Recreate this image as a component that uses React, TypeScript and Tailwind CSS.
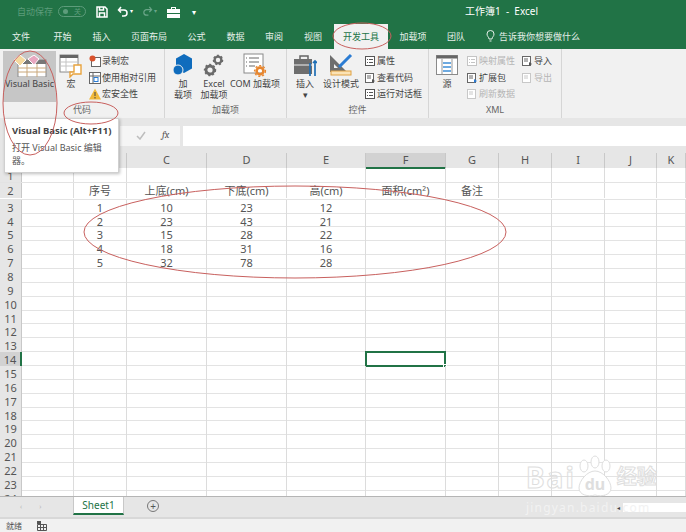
const font = "[font-family:'Noto_Sans','Noto_Sans_CJK_SC',sans-serif]"

const rowClass = 'grid grid-cols-[22px_52px_53px_80px_80px_79px_80px_53px_53px_53px_52px_1fr]'
const tabs = [
  ['文件', 'w-[42px]'],
  ['开始', 'w-[41px]'],
  ['插入', 'w-[37px]'],
  ['页面布局', 'w-[58px]'],
  ['公式', 'w-[37px]'],
  ['数据', 'w-[41px]'],
  ['审阅', 'w-[36px]'],
  ['视图', 'w-[42px]'],
]
const columns = ['A', 'B', 'C', 'D', 'E', 'F', 'G', 'H', 'I', 'J', 'K']
const cells: Record<number, string[]> = {
  2: ['', '序号', '上底(cm)', '下底(cm)', '高(cm)', '面积(cm²)', '备注'],
  3: ['', '1', '10', '23', '12'],
  4: ['', '2', '23', '43', '21'],
  5: ['', '3', '15', '28', '22'],
  6: ['', '4', '18', '31', '16'],
  7: ['', '5', '32', '78', '28'],
}

const SmallItem = ({ icon, label, off }: { icon: React.ReactNode; label: string; off?: boolean }) => (
  <div className={`flex h-[16.5px] items-center gap-[1px] whitespace-nowrap text-[9px] ${off ? 'text-[#b5b5b5]' : 'text-[#444]'}`}>
    <span className="flex h-3 w-3 shrink-0 items-center justify-center">{icon}</span>
    {label}
  </div>
)

const LargeButton = ({ width, icon, lines }: { width: string; icon: React.ReactNode; lines: string[] }) => (
  <div className={`flex ${width} shrink-0 flex-col items-center pt-1 text-[9px] leading-[11px] text-[#444]`}>
    <div className="flex h-[25px] items-center justify-center">{icon}</div>
    {lines.map((l) => (
      <div key={l} className="whitespace-nowrap">{l}</div>
    ))}
  </div>
)

const Group = ({ width, label, children }: { width: string; label: string; children: React.ReactNode }) => (
  <div className={`flex ${width} shrink-0 flex-col border-r border-[#d6d6d6]`}>
    <div className="flex h-[55px]">{children}</div>
    <div className="h-[11px] text-center text-[9px] leading-[11px] text-[#666]">{label}</div>
  </div>
)

const BoxIcon = ({ off }: { off?: boolean }) => (
  <svg width="12" height="12" viewBox="0 0 12 12" fill="none" stroke={off ? '#c4c4c4' : '#555'}>
    <rect x="1.5" y="1.5" width="9" height="9" fill="#fff" />
    <path d="M3 4.5h1M5 4.5h4M3 7.5h1M5 7.5h4" />
  </svg>
)

const VbIcon = () => (
  <svg width="36" height="22" viewBox="0 0 36 22">
    <rect x="6" y="5" width="28" height="17" fill="#fff" stroke="#8a8a8a" />
    <rect x="6" y="5" width="28" height="4" fill="#777" />
    <path d="M6 13h28M6 17h28M15 9v13M25 9v13" stroke="#c9a77a" />
    <path d="M8 0l6 5-6 6-6-6z" fill="#f5d9a0" stroke="#fff" />
    <path d="M22 0l5 4-5 6-6-6z" fill="#e8a7c0" stroke="#fff" />
  </svg>
)

const MacroIcon = () => (
  <svg width="24" height="25" viewBox="0 0 24 25">
    <rect x="1" y="2" width="18" height="17" fill="#fff" stroke="#8a8a8a" />
    <rect x="1" y="2" width="18" height="3" fill="#666" />
    <path d="M1 9h18M1 13h18M7 5v14" stroke="#c4c4c4" />
    <path d="M15 12h7v9h-8l-3 3v-5h4z" fill="#fff" stroke="#e8a33d" strokeWidth="1.4" />
  </svg>
)

const AddinIcon = () => (
  <svg width="20" height="22" viewBox="0 0 20 22">
    <path d="M11 0l8 4.5v10L11 19l-8-4.5v-10z" fill="#0f6cbd" />
    <circle cx="5" cy="16" r="5" fill="#0f6cbd" stroke="#f1f1f1" />
  </svg>
)

const Gear = ({ x, y, r }: { x: number; y: number; r: number }) => (
  <g>
    <circle cx={x} cy={y} r={r} fill="none" stroke="#6b6b6b" strokeWidth={r * 0.7} />
    <circle cx={x} cy={y} r={r * 1.35} fill="none" stroke="#6b6b6b" strokeWidth={r * 0.4} strokeDasharray="2 2" />
  </g>
)

const GearsIcon = () => (
  <svg width="22" height="24" viewBox="0 0 22 24">
    <Gear x={7} y={17} r={4} />
    <Gear x={15} y={7} r={3.4} />
  </svg>
)

const ComIcon = () => (
  <svg width="24" height="24" viewBox="0 0 24 24">
    <rect x="1" y="1" width="19" height="19" fill="#fff" stroke="#8a8a8a" />
    <path d="M6 5h10M6 9h10M6 13h6M3 5h1M3 9h1M3 13h1" stroke="#666" />
    <circle cx="17" cy="18" r="3.4" fill="none" stroke="#e8862e" strokeWidth="2.6" />
    <circle cx="17" cy="18" r="5.4" fill="none" stroke="#e8862e" strokeWidth="1.4" strokeDasharray="2 2" />
  </svg>
)

const ToolboxIcon = () => (
  <svg width="23" height="21" viewBox="0 0 23 21">
    <path d="M6 4V1h8v3" fill="none" stroke="#666" strokeWidth="1.5" />
    <rect x="0" y="4" width="18" height="15" fill="#6e6e6e" />
    <path d="M0 10h18" stroke="#f1f1f1" />
    <path d="M16 8v13M21 6v15M19 8l2-2 2 2" stroke="#1f6fb5" strokeWidth="1.7" fill="none" />
  </svg>
)

const DesignIcon = () => (
  <svg width="26" height="24" viewBox="0 0 26 24">
    <path d="M2 2v17h17z M6 11v4h4z" fill="#6e6e6e" fillRule="evenodd" />
    <path d="M11 14L23 2" stroke="#2b7cd3" strokeWidth="3" />
    <rect x="3" y="18" width="20" height="4" fill="#fbe3b5" stroke="#e0a243" />
  </svg>
)

const SourceIcon = () => (
  <svg width="22" height="20" viewBox="0 0 22 20">
    <rect x="0.5" y="0.5" width="21" height="19" fill="#fff" stroke="#8a8a8a" />
    <rect x="0.5" y="0.5" width="21" height="3" fill="#666" />
    <path d="M6 4v15M16 4v15" stroke="#999" />
    <path d="M7 8h8M7 12h8M7 16h8" stroke="#3f8fd6" strokeWidth="1.5" />
  </svg>
)

const PageIcon = ({ off, color }: { off?: boolean; color?: string }) => (
  <svg width="12" height="12" viewBox="0 0 12 12" fill="none" stroke={off ? '#c8c8c8' : '#666'}>
    <rect x="1.5" y="1.5" width="8" height="9" fill="#fff" />
    <path d="M3 4h4M3 6h4" />
    {color && <path d="M8 7l3 2-3 2z" fill={color} stroke="none" />}
  </svg>
)

export default function App() {
  const rows = Array.from({ length: 24 }, (_, i) => i + 1)

  return (
    <div className={`relative flex h-[532px] w-[686px] flex-col overflow-hidden bg-white ${font}`}>
      {/* Title bar */}
      <div className="flex h-6 items-center bg-[#217346] text-white">
        <span className="ml-[17px] text-[9px] text-[#5d9c7b]">自动保存</span>
        <span className="ml-[5px] flex h-[11px] w-7 items-center justify-between rounded-full border border-[#5d9c7b] px-1 text-[7px] leading-none text-[#5d9c7b]">
          <span className="h-[5px] w-[5px] rounded-full bg-[#5d9c7b]" />关
        </span>
        <svg className="ml-[10px]" width="12" height="12" viewBox="0 0 12 12" fill="none" stroke="#fff" strokeWidth="1.5">
          <path d="M1 1h8l2 2v8H1zM3.5 1v3h4V1M3.5 11V7h5v4" />
        </svg>
        <svg className="ml-[9px]" width="12" height="12" viewBox="0 0 12 12" fill="none" stroke="#fff" strokeWidth="1.5">
          <path d="M4 1L1.5 4 4 6.500M2 4h5a3 3 0 010 6H5" />
        </svg>
        <span className="ml-[1px] text-[6px]">▾</span>
        <svg className="ml-[9px]" width="11" height="11" viewBox="0 0 12 12" fill="none" stroke="#6aa588" strokeWidth="1.3">
          <path d="M8 1l2.500 3L8 6.500M10 4H5a3 3 0 000 6h2" />
        </svg>
        <span className="ml-[1px] text-[6px] text-[#6aa588]">▾</span>
        <svg className="ml-[10px]" width="13" height="12" viewBox="0 0 13 12" fill="#fff">
          <path d="M4 3V1h5v2h4v4H0V3zM5 2v1h3V2zM0 8h13v4H0z" />
        </svg>
        <span className="ml-[12px] text-[8px]">▾</span>
        <span className="ml-[269px] whitespace-nowrap text-[10px]">工作簿1&nbsp; -&nbsp; Excel</span>
      </div>

      {/* Tabs */}
      <div className="flex h-[25px] items-center bg-[#217346] text-[9px] text-[#e6f0ea]">
        {tabs.map(([t, w]) => (
          <div key={t} className={`${w} text-center`}>{t}</div>
        ))}
        <div className="flex h-full w-[54px] items-center justify-center bg-[#f1f1f1] text-[#217346]">开发工具</div>
        <div className="w-[50px] text-center">加载项</div>
        <div className="w-9 text-center">团队</div>
        <svg className="ml-[12px]" width="9" height="12" viewBox="0 0 9 12" fill="none" stroke="#e6f0ea">
          <path d="M3 9C3 7 1 6.500 1 4a3.500 3.500 0 017 0C8 6.500 6 7 6 9zM3.500 11h2" />
        </svg>
        <span className="ml-[4px]">告诉我你想要做什么</span>
      </div>

      {/* Ribbon */}
      <div className="flex h-[69px] bg-[#f1f1f1]">
        <Group width="w-[165px]" label="代码">
          <div className="ml-[3px] mt-[2px] flex h-[51px] w-[53px] flex-col items-center bg-[#c6c6c6] pt-[3px] text-[9px] leading-[11px] text-[#444]">
            <div className="flex h-[24px] items-center"><VbIcon /></div>
            <div className="whitespace-nowrap">Visual Basic</div>
          </div>
          <LargeButton width="w-[30px]" icon={<MacroIcon />} lines={['宏']} />
          <div className="ml-[3px] pt-[4px]">
            <SmallItem
              label="录制宏"
              icon={
                <svg width="12" height="12" viewBox="0 0 12 12">
                  <rect x="2.500" y="2.500" width="9" height="9" fill="#fff" stroke="#666" />
                  <circle cx="3.500" cy="3.500" r="3" fill="#d9522c" />
                </svg>
              }
            />
            <SmallItem
              label="使用相对引用"
              icon={
                <svg width="12" height="12" viewBox="0 0 12 12" fill="none" stroke="#666">
                  <rect x="0.500" y="0.500" width="11" height="11" fill="#fff" />
                  <path d="M0.500 4h11M4 .5v11" />
                  <rect x="5" y="5.500" width="4" height="4" stroke="#2b7cd3" />
                </svg>
              }
            />
            <SmallItem
              label="宏安全性"
              icon={
                <svg width="12" height="12" viewBox="0 0 12 12">
                  <path d="M6 0.500L12 11.500H0z" fill="#f0b93a" />
                  <path d="M6 4v4M6 9v1.500" stroke="#444" />
                </svg>
              }
            />
          </div>
        </Group>

        <Group width="w-[122px]" label="加载项">
          <div className="w-[5px]" />
          <LargeButton width="w-[26px]" icon={<AddinIcon />} lines={['加', '载项']} />
          <LargeButton width="w-[36px]" icon={<GearsIcon />} lines={['Excel', '加载项']} />
          <LargeButton width="w-[46px]" icon={<ComIcon />} lines={['COM 加载项']} />
        </Group>

        <Group width="w-[142px]" label="控件">
          <div className="w-1" />
          <LargeButton width="w-7" icon={<ToolboxIcon />} lines={['插入', '▾']} />
          <LargeButton width="w-11" icon={<DesignIcon />} lines={['设计模式']} />
          <div className="ml-[1px] pt-[4px]">
            <SmallItem label="属性" icon={<BoxIcon />} />
            <SmallItem label="查看代码" icon={<PageIcon color="#555" />} />
            <SmallItem label="运行对话框" icon={<BoxIcon />} />
          </div>
        </Group>

        <Group width="w-[133px]" label="XML">
          <div className="w-[6px]" />
          <LargeButton width="w-6" icon={<SourceIcon />} lines={['源']} />
          <div className="ml-[7px] w-[55px] pt-[4px]">
            <SmallItem off label="映射属性" icon={<BoxIcon off />} />
            <SmallItem label="扩展包" icon={<PageIcon color="#2b7cd3" />} />
            <SmallItem off label="刷新数据" icon={<PageIcon off />} />
          </div>
          <div className="pt-[4px]">
            <SmallItem label="导入" icon={<PageIcon color="#555" />} />
            <SmallItem off label="导出" icon={<PageIcon off />} />
          </div>
        </Group>
      </div>

      {/* Formula bar */}
      <div className="flex h-[35px] items-start bg-[#e6e6e6] pt-2">
        <div className="flex h-5 w-[183px] items-center text-[#9a9a9a]">
          <div className="ml-[120px] flex h-full w-[60px] items-center bg-[#f5f5f5]">
            <svg className="ml-[16px]" width="10" height="9" viewBox="0 0 10 9" fill="none" stroke="#bdbdbd" strokeWidth="1.5">
              <path d="M1 5l3 3 5-7" />
            </svg>
            <span className="ml-[16px] font-serif text-[10px] italic text-[#555]">fx</span>
          </div>
        </div>
        <div className="h-5 flex-1 bg-white" />
      </div>

      {/* Column headers */}
      <div className={`${rowClass} h-[15px] bg-[#e6e6e6] text-center text-[11px] leading-[14px] text-[#555]`}>
        <div />
        {columns.map((c) => (
          <div key={c} className={`border-r border-[#c8c8c8] ${c === 'F' ? 'border-b-2 border-b-[#217346] bg-[#d2d2d2]' : ''}`}>{c}</div>
        ))}
        <div />
      </div>

      {/* Sheet */}
      <div className="h-[329px] overflow-hidden">
        {rows.map((r) => (
          <div
            key={r}
            className={`${rowClass} ${r === 1 ? 'h-[15px]' : r === 2 ? 'h-[17px]' : 'h-[13.87px]'} border-b border-[#e3e3e3] text-center text-[11px] leading-[13px] text-[#555]`}
          >
            <div className={`border-r pt-[1px] text-[11px] ${r === 14 ? 'border-r-2 border-r-[#217346] bg-[#d2d2d2]' : 'border-[#c8c8c8] bg-[#e6e6e6]'}`}>{r}</div>
            {columns.map((c, i) => (
              <div key={c} className="relative whitespace-nowrap border-r border-[#dcdcdc] pt-[1px]">
                {cells[r]?.[i]}
                {r === 14 && c === 'F' && (
                  <div className="absolute inset-[-1px] border-2 border-[#217346]">
                    <div className="absolute -bottom-[3px] -right-[3px] h-1 w-1 border border-white bg-[#217346]" />
                  </div>
                )}
              </div>
            ))}
            <div />
          </div>
        ))}
      </div>

      {/* Sheet tabs */}
      <div className="flex h-[21px] items-start border-t border-[#b5b5b5] bg-[#e6e6e6]">
        <div className="flex w-[73px] shrink-0 gap-[17px] pl-5 pt-[5px] text-[7px] text-[#bbb]">
          <span>‹</span>
          <span>›</span>
        </div>
        <div className="h-[18px] w-[51px] border-x border-b-2 border-[#c8c8c8] border-b-[#217346] bg-white text-center text-[10px] leading-[16px] text-[#217346]">Sheet1</div>
        <div className="ml-[23px] mt-[3px] flex h-3 w-3 items-center justify-center rounded-full border border-[#777] text-[10px] leading-none text-[#555]">+</div>
        <div className="ml-[454px] mt-[6px] flex h-[9px] flex-1">
          <div className="flex w-[10px] items-center justify-center bg-[#e6e6e6] text-[6px] leading-none text-[#444]">◂</div>
          <div className="flex-1 bg-white" />
        </div>
      </div>

      {/* Status bar */}
      <div className="flex h-[15px] items-center border-t-2 border-[#d8d8d8] bg-[#f1f1f1] text-[8px] text-[#555]">
        <span className="ml-[6px]">就绪</span>
        <svg className="ml-[15px]" width="10" height="10" viewBox="0 0 10 10" fill="none" stroke="#555">
          <path d="M.5 3.500h9v6h-9zM3.500 3.500v6M6.500 3.500v6M.5 6.500h9" />
          <rect x="0" y="0" width="4" height="3" fill="#555" stroke="none" />
        </svg>
      </div>

      {/* Tooltip */}
      <div className="absolute left-1 top-[118px] h-[55px] w-[115px] border border-[#d0d0d0] bg-white pl-[7px] pr-1 pt-[5px] text-[9.5px] leading-[13px] text-[#555] shadow-[1px_1px_3px_rgba(0,0,0,0.25)]">
        <div className="whitespace-nowrap font-bold text-[#444]">Visual Basic (Alt+F11)</div>
        <div className="mt-1 text-[9px]">打开 Visual Basic 编辑器。</div>
      </div>

      {/* Baidu watermark */}
      <div className="absolute left-[526px] top-[455px]">
        <div className="flex items-center">
          <span className="text-[28px] font-bold leading-[42px] tracking-[2px] text-transparent [-webkit-text-stroke:1px_#dedede]">Bai</span>
          <svg width="38" height="44" viewBox="0 0 38 44" fill="#fff" stroke="#dedede">
            <ellipse cx="19" cy="7" rx="4" ry="6" />
            <ellipse cx="8" cy="11" rx="4" ry="6" />
            <ellipse cx="30" cy="11" rx="4" ry="6" />
            <path d="M19 16c8 0 16 10 16 17s-9 9-16 7c-7 2-16 0-16-7s8-17 16-17z" />
            <text x="19" y="35" textAnchor="middle" fontSize="16" fontWeight="700" fill="#dedede" stroke="none">du</text>
          </svg>
          <span className="ml-[3px] text-[20px] font-bold text-transparent [-webkit-text-stroke:1px_#dedede]">经验</span>
        </div>
        <div className="absolute left-0 top-[44px] whitespace-nowrap text-[12px] tracking-[1.2px] text-[#f2f2f2]">jingyan.baidu.com</div>
      </div>

      {/* Hand-drawn red annotations */}
      <svg className="pointer-events-none absolute inset-0" width="686" height="532" viewBox="0 0 686 532" fill="none" stroke="#c8605e" strokeWidth="1">
        <ellipse cx="30" cy="103" rx="27" ry="52" />
        <ellipse cx="91" cy="113" rx="27" ry="11" />
        <ellipse cx="362" cy="36" rx="29" ry="13" />
        <ellipse cx="295" cy="232" rx="211" ry="46" />
      </svg>
    </div>
  )
}
